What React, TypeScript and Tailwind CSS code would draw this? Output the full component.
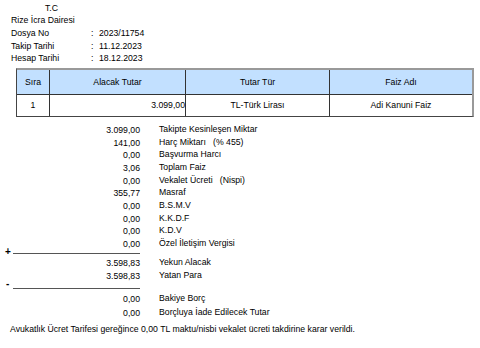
import React from "react";

const rows: [string, React.ReactNode][] = [
  ["3.099,00", "Takipte Kesinleşen Miktar"],
  ["141,00", <>Harç Miktarı&nbsp;&nbsp; (% 455)</>],
  ["0,00", "Başvurma Harcı"],
  ["3,06", "Toplam Faiz"],
  ["0,00", <>Vekalet Ücreti&nbsp;&nbsp; (Nispi)</>],
  ["355,77", "Masraf"],
  ["0,00", "B.S.M.V"],
  ["0,00", "K.K.D.F"],
  ["0,00", "K.D.V"],
  ["0,00", "Özel İletişim Vergisi"],
];

function Row({ amount, label }: { amount: string; label: React.ReactNode }) {
  return (
    <div className="flex h-[12.7px] items-center">
      <div className="w-[140px] text-right pt-[2px]">{amount}</div>
      <div className="ml-[19px]">{label}</div>
    </div>
  );
}

export default function App() {
  return (
    <div
      className="w-[480px] h-[348px] bg-white text-black text-[8.7px] leading-[12px] overflow-hidden"
      style={{ fontFamily: '"Liberation Sans", Arial, sans-serif' }}
    >
      <div className="pt-[2px] pl-[11px]">
        <div className="pl-[34px] h-[12px]">T.C</div>
        <div className="h-[13px]">Rize İcra Dairesi</div>
        <div className="flex h-[12.5px]">
          <div className="w-[80px]">Dosya No</div>
          <div className="w-[8px]">:</div>
          <div>2023/11754</div>
        </div>
        <div className="flex h-[12.5px]">
          <div className="w-[80px]">Takip Tarihi</div>
          <div className="w-[8px]">:</div>
          <div>11.12.2023</div>
        </div>
        <div className="flex h-[12.5px]">
          <div className="w-[80px]">Hesap Tarihi</div>
          <div className="w-[8px]">:</div>
          <div>18.12.2023</div>
        </div>
      </div>

      <div className="ml-[16px] mt-[3px] w-[458px] border border-[#444] border-t-[#999] border-r-[#999] border-t-2 border-r-2">
        <div className="flex h-[25px] bg-[#c2e0ff] border-b border-[#333] items-center text-center">
          <div className="w-[33px] h-full flex items-center justify-center border-r border-[#333]">Sıra</div>
          <div className="w-[136px] h-full flex items-center justify-center border-r border-[#333]">Alacak Tutar</div>
          <div className="w-[144px] h-full flex items-center justify-center border-r border-[#333]">Tutar Tür</div>
          <div className="flex-1 h-full flex items-center justify-center">Faiz Adı</div>
        </div>
        <div className="flex h-[21px] items-center">
          <div className="w-[33px] h-full flex items-center justify-center border-r border-[#333]">1</div>
          <div className="w-[136px] h-full flex items-center justify-end border-r border-[#333]">3.099,00</div>
          <div className="w-[144px] h-full flex items-center justify-center border-r border-[#333]">TL-Türk Lirası</div>
          <div className="flex-1 h-full flex items-center justify-center">Adi Kanuni Faiz</div>
        </div>
      </div>

      <div className="mt-[6px]">
        {rows.map(([a, l], i) => (
          <Row key={i} amount={a} label={l} />
        ))}
        <div className="flex items-end h-[6.5px]">
          <div className="w-[13px] pl-[5px] leading-none text-[10px] font-bold -mb-[1px]">+</div>
          <div className="w-[127px] border-t-[1.5px] border-[#555] mb-[1.5px]" />
        </div>
        <Row amount="3.598,83" label="Yekun Alacak" />
        <Row amount="3.598,83" label="Yatan Para" />
        <div className="flex items-end h-[10px]">
          <div className="w-[13px] pl-[6px] leading-none text-[10px] font-bold pb-[2px]">-</div>
          <div className="w-[127px] border-t-[1.5px] border-[#555] mb-[2.5px]" />
        </div>
        <Row amount="0,00" label="Bakiye Borç" />
        <div className="h-[1.5px]" />
        <Row amount="0,00" label="Borçluya İade Edilecek Tutar" />
        <div className="pl-[10px] mt-[4.5px]">
          Avukatlık Ücret Tarifesi gereğince 0,00 TL maktu/nisbi vekalet ücreti takdirine karar verildi.
        </div>
      </div>
    </div>
  );
}
